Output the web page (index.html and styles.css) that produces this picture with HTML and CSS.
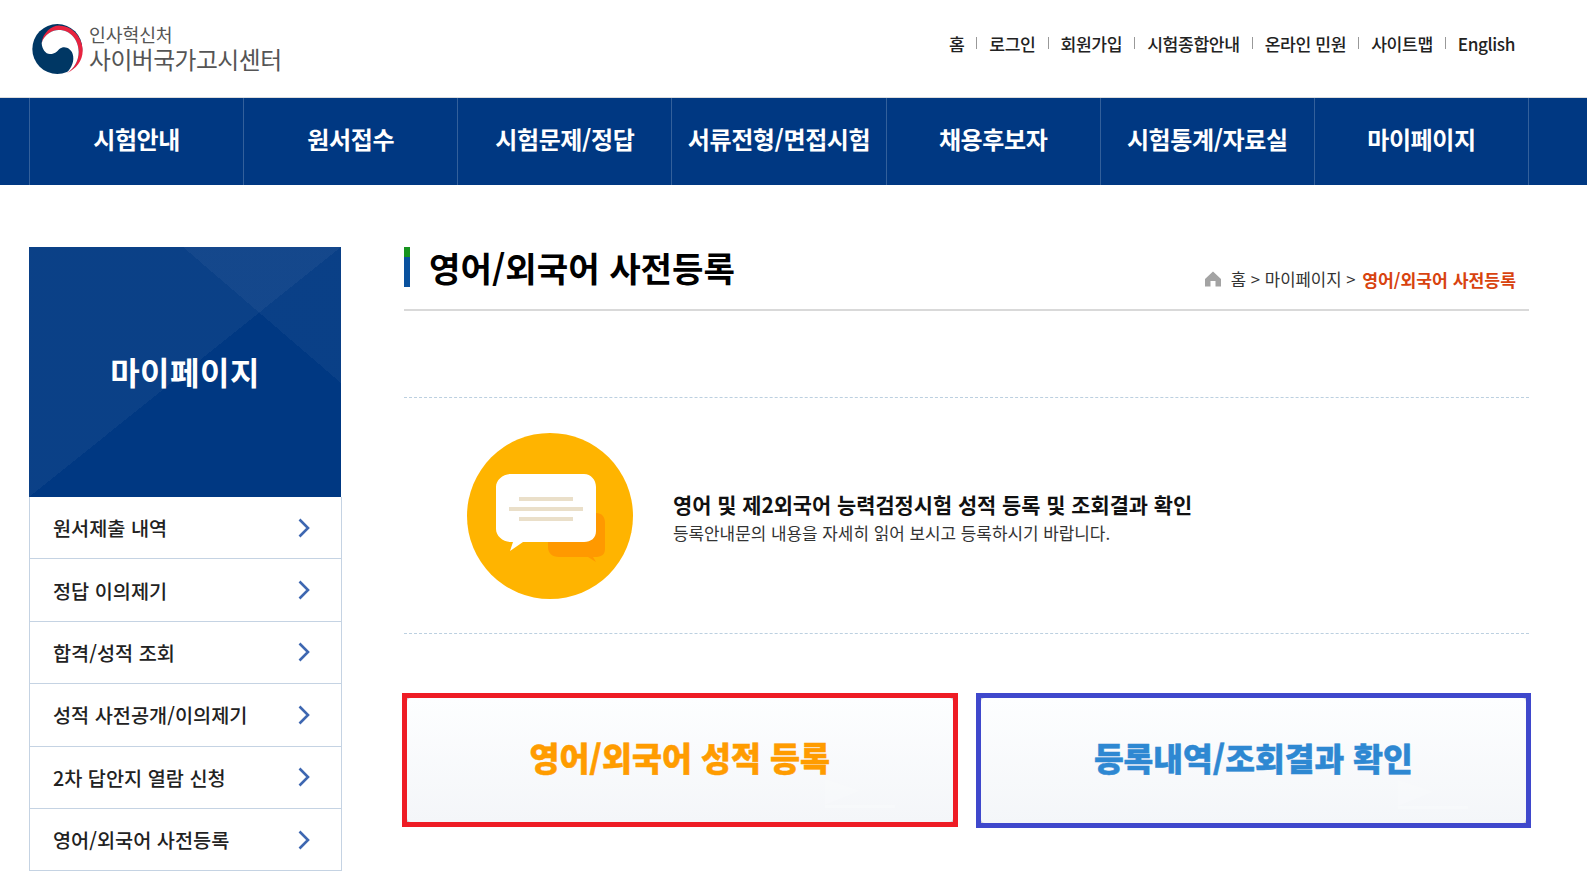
FILE: index.html
```html
<!DOCTYPE html>
<html lang="ko">
<head>
    <meta charset="UTF-8">
    <title>영어/외국어 사전등록</title>
    <link rel="stylesheet" href="styles.css">
</head>
<body>
    <header class="top">
        <a class="logo" href="#">
            <svg class="logo-mark" viewBox="0 0 189 180" width="63" height="60">
                <circle cx="94" cy="90" r="75" fill="#003764"/>
                <path d="M47 72C50 40 80 18 102 20C145 22 170 60 170 95C170 125 150 150 122 162C145 148 158 125 158 98C158 65 135 33 98 33C78 33 58 45 47 72Z" fill="#e8233f"/>
                <path d="M47 72C55 45 80 33 98 33C135 33 158 65 158 98C158 125 145 148 122 162C138 145 146 125 140 105C135 88 115 78 100 90C92 98 88 105 72 105C58 105 48 90 47 72Z" fill="#fff"/>
            </svg>
            <span class="logo-text">
                <span class="logo-small">인사혁신처</span>
                <span class="logo-big">사이버국가고시센터</span>
            </span>
        </a>
        <ul class="util">
            <li>홈</li>
            <li>로그인</li>
            <li>회원가입</li>
            <li>시험종합안내</li>
            <li>온라인 민원</li>
            <li>사이트맵</li>
            <li>English</li>
        </ul>
    </header>

    <nav class="gnb">
        <ul class="gnb-list">
            <li>시험안내</li>
            <li>원서접수</li>
            <li>시험문제/정답</li>
            <li>서류전형/면접시험</li>
            <li>채용후보자</li>
            <li>시험통계/자료실</li>
            <li>마이페이지</li>
        </ul>
    </nav>

    <div class="wrap">
        <aside class="side">
            <h2 class="side-title">마이페이지</h2>
            <ul class="side-menu">
                <li>원서제출 내역<svg class="arrow" viewBox="0 0 12 20"><path d="M1.500 1.500L10 10L1.500 18.500"/></svg></li>
                <li>정답 이의제기<svg class="arrow" viewBox="0 0 12 20"><path d="M1.500 1.500L10 10L1.500 18.500"/></svg></li>
                <li>합격/성적 조회<svg class="arrow" viewBox="0 0 12 20"><path d="M1.500 1.500L10 10L1.500 18.500"/></svg></li>
                <li>성적 사전공개/이의제기<svg class="arrow" viewBox="0 0 12 20"><path d="M1.500 1.500L10 10L1.500 18.500"/></svg></li>
                <li>2차 답안지 열람 신청<svg class="arrow" viewBox="0 0 12 20"><path d="M1.500 1.500L10 10L1.500 18.500"/></svg></li>
                <li>영어/외국어 사전등록<svg class="arrow" viewBox="0 0 12 20"><path d="M1.500 1.500L10 10L1.500 18.500"/></svg></li>
            </ul>
        </aside>

        <main class="content">
            <div class="page-head">
                <h1 class="page-title">영어/외국어 사전등록</h1>
                <div class="crumbs">
                    <svg class="crumb-home" viewBox="0 0 16 16" width="16" height="16"><path d="M8 .5L16 8V15.500H10.500V10H5.500V15.500H0V8Z" fill="#a3a3a3"/></svg>
                    <span class="crumb-first">홈</span><span class="crumb-mid"> &gt; 마이페이지 &gt; </span><b>영어/외국어 사전등록</b>
                </div>
            </div>

            <section class="intro">
                <svg class="intro-icon" viewBox="0 0 166 166" width="166" height="166">
                    <circle cx="83" cy="83" r="83" fill="#ffb400"/>
                    <path d="M90 80H129C135 80 138 84 138 90V116C138 122 134 124 128 124H126L129 129L121 124H92C85 124 81 120 81 114V90Z" fill="#ff9900"/>
                    <path d="M44 41H117C124 41 129 47 129 54V98C129 105 124 109 117 109H56L43 118L46 109H44C36 109 29 103 29 96V54C29 47 36 41 44 41Z" fill="#fff"/>
                    <rect x="52" y="64" width="54" height="4" fill="#eadfc9"/>
                    <rect x="42" y="74" width="74" height="4" fill="#eadfc9"/>
                    <rect x="52" y="84" width="54" height="4" fill="#eadfc9"/>
                </svg>
                <div class="intro-text">
                    <h3>영어 및 제2외국어 능력검정시험 성적 등록 및 조회결과 확인</h3>
                    <p>등록안내문의 내용을 자세히 읽어 보시고 등록하시기 바랍니다.</p>
                </div>
            </section>

            <div class="btns">
                <a class="btn btn-red" href="#"><span class="btn-face">영어/외국어 성적 등록</span></a>
                <a class="btn btn-blue" href="#"><span class="btn-face">등록내역/조회결과 확인</span></a>
            </div>
        </main>
    </div>
</body>
</html>
```

FILE: styles.css
```css
* {
    box-sizing: border-box;
}
html, body {
    height: 872px;
    overflow: hidden;
}
body {
    margin: 0;
    font-family: "Noto Sans CJK KR", "Noto Sans", sans-serif;
    color: #222;
    background: #fff;
}
ul {
    list-style: none;
    margin: 0;
    padding: 0;
}
a {
    text-decoration: none;
    color: inherit;
}

/* header */
.top {
    height: 97px;
    padding: 0 72px 0 26px;
    display: flex;
    align-items: center;
    justify-content: space-between;
}
.logo {
    display: flex;
    align-items: center;
}
.logo-text {
    display: flex;
    flex-direction: column;
    padding-bottom: 2px;
    color: #555;
}
.logo-small {
    font-size: 18.300px;
    line-height: 22px;
    letter-spacing: -0.1px;
}
.logo-big {
    font-size: 23.800px;
    line-height: 28px;
    letter-spacing: -0.5px;
}
.util {
    display: flex;
    align-items: center;
    font-size: 17.200px;
    font-weight: 500;
    color: #222;
    margin-top: -11px;
}
.util li {
    display: flex;
    align-items: center;
    letter-spacing: -0.4px;
}
.util li + li::before {
    content: "";
    width: 1px;
    height: 12px;
    background: #999;
    margin: 0 12px;
}

/* main nav */
.gnb {
    height: 88px;
    background: #003882;
    border-top: 1px solid #ddd;
    padding: 0 58px 0 29px;
}
.gnb-list {
    display: grid;
    grid-template-columns: repeat(7, 1fr);
    height: 100%;
    border-left: 1px solid #33609b;
}
.gnb-list li {
    display: flex;
    align-items: center;
    justify-content: center;
    padding-bottom: 6px;
    color: #fff;
    font-size: 24px;
    font-weight: 700;
    letter-spacing: -0.4px;
    border-right: 1px solid #33609b;
}

/* body */
.wrap {
    width: 1500px;
    margin: 62px 0 0 29px;
    display: flex;
    gap: 63px;
}
.side {
    width: 312px;
    flex: none;
}
.side-title {
    margin: 0;
    height: 250px;
    display: flex;
    align-items: center;
    justify-content: center;
    color: #fff;
    font-size: 32px;
    font-weight: 700;
    letter-spacing: 0.5px;
    padding-bottom: 2px;
    background:
        linear-gradient(to top right, transparent 50%, rgba(255,255,255,.04) 50%) no-repeat right top / 158px 136px,
        linear-gradient(to top left, transparent 50%, rgba(255,255,255,.045) 50%),
        #003882;
}
.side-menu {
    margin-right: -1px;
    border-left: 1px solid #c5d3e3;
    border-right: 1px solid #c5d3e3;
}
.side-menu li {
    height: 62.400px;
    border-bottom: 1px solid #c5d3e3;
    padding: 0 31px 0 23px;
    display: flex;
    align-items: center;
    justify-content: space-between;
    font-size: 19.700px;
    font-weight: 500;
    color: #222;
}
.arrow {
    width: 12px;
    height: 20px;
    fill: none;
    stroke: #3e67b1;
    stroke-width: 2.600;
}

.content {
    flex: 1;
    min-width: 0;
}
.page-head {
    height: 64px;
    border-bottom: 2px solid #d9d9d9;
    display: flex;
    justify-content: space-between;
}
.page-title {
    margin: 0;
    height: 40px;
    padding-left: 25px;
    font-size: 34.200px;
    font-weight: 700;
    line-height: 40px;
    color: #000;
    background: linear-gradient(#17941f 10px, #0a529e 10px) no-repeat left top / 6px 40px;
}
.crumbs {
    display: flex;
    align-items: center;
    height: 24px;
    margin: 20px 13px 0 0;
    font-size: 16.700px;
    color: #333;
    white-space: pre;
}
.crumb-first {
    margin-left: 10px;
}
.crumb-mid {
    margin-right: 2px;
}
.crumbs b {
    color: #d8430f;
    font-size: 17.200px;
    font-weight: 700;
}

.intro {
    margin-top: 86px;
    height: 237px;
    border-top: 1px dashed #bcd0e0;
    border-bottom: 1px dashed #bcd0e0;
    padding-left: 63px;
    display: flex;
    align-items: center;
    gap: 40px;
}
.intro-text {
    padding-top: 3px;
}
.intro-text h3 {
    margin: 0;
    font-size: 20.850px;
    font-weight: 700;
    line-height: 28px;
    color: #111;
}
.intro-text p {
    margin: 3px 0 0;
    font-size: 16.900px;
    line-height: 24px;
    color: #333;
}

.btns {
    display: flex;
    align-items: flex-start;
    gap: 18px;
    margin: 59px -2px 0 -2px;
}
.btn {
    flex: 1;
    height: 134px;
    display: flex;
    background: #c9ccd1;
}
.btn-face {
    position: relative;
    flex: 1;
    display: flex;
    align-items: center;
    justify-content: center;
    padding-bottom: 8px;
    border-radius: 4px;
    font-size: 32.600px;
    font-weight: 900;
    -webkit-text-stroke: 0.5px currentColor;
    background: linear-gradient(#fdfeff, #f4f6f9);
}
/* faint arrow mark in the button corner */
.btn-face::before {
    content: "";
    position: absolute;
    right: 93px;
    bottom: 17px;
    width: 35px;
    height: 26px;
    background: rgba(255,255,255,.2);
    clip-path: polygon(0 0, 100% 45%, 0 100%);
}
.btn-face::after {
    content: "";
    position: absolute;
    right: 58px;
    bottom: 14px;
    width: 70px;
    height: 3px;
    background: rgba(255,255,255,.25);
}
.btn-red {
    border: 5px solid #ee1c25;
    color: #ff9c00;
}
.btn-blue {
    height: 135px;
    border: 5px solid #3f48cc;
    color: #2e88d2;
}
.btn-blue .btn-face {
    font-size: 32.300px;
}
```
